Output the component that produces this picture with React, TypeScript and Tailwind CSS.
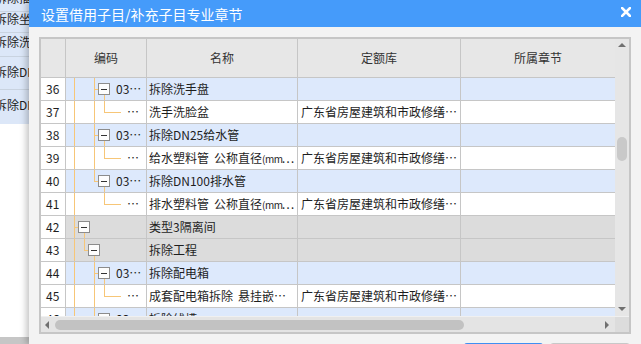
import React from 'react';

const LINE = '#f7c677';
const LIB = '广东省房屋建筑和市政修缮…';

type Seg = [number, number, number, number];
type Tone = 'blue' | 'white' | 'gray';

type Row = {
    n: number;
    tone: Tone;
    segs: Seg[];
    box?: number;
    code?: string;
    leaf?: boolean;
    name: React.ReactNode;
    lib?: string;
};

// tree connector pieces, in px relative to the 编码 cell
const L1: Seg = [8.5, 0, 8.5, 22];
const L2: Seg = [28.5, 0, 28.5, 22];
const L2top: Seg = [28.5, 0, 28.5, 11.5];
const stub: Seg = [28.5, 11.5, 32, 11.5];
const down: Seg = [38.5, 17, 38.5, 22];
const leafV: Seg = [38.5, 0, 38.5, 11.5];
const leafH: Seg = [38.5, 11.5, 55, 11.5];

const Pipe = ({ head }: { head: string }) => (
    <>
        {head}
        <span className="ml-[5px]">公称直径</span>
        <span className="text-[10px] tracking-[-0.5px]">(mm</span>
        <span className="-ml-[1px]">…</span>
    </>
);

const rows: Row[] = [
    { n: 36, tone: 'blue', segs: [L1, L2, stub, down], box: 32, code: '03…', name: '拆除洗手盘' },
    { n: 37, tone: 'white', segs: [L1, L2, leafV, leafH], leaf: true, name: '洗手洗脸盆', lib: LIB },
    { n: 38, tone: 'blue', segs: [L1, L2, stub, down], box: 32, code: '03…', name: '拆除DN25给水管' },
    { n: 39, tone: 'white', segs: [L1, L2, leafV, leafH], leaf: true, name: <Pipe head="给水塑料管" />, lib: LIB },
    { n: 40, tone: 'blue', segs: [L1, L2top, stub, down], box: 32, code: '03…', name: '拆除DN100排水管' },
    { n: 41, tone: 'white', segs: [L1, leafV, leafH], leaf: true, name: <Pipe head="排水塑料管" />, lib: LIB },
    { n: 42, tone: 'gray', segs: [L1, [8.5, 11.5, 12, 11.5], [18.5, 17, 18.5, 22]], box: 12, name: '类型3隔离间' },
    {
        n: 43,
        tone: 'gray',
        segs: [L1, [18.5, 0, 18.5, 11.5], [18.5, 11.5, 22, 11.5], [28.5, 17, 28.5, 22]],
        box: 22,
        name: '拆除工程',
    },
    { n: 44, tone: 'blue', segs: [L1, L2, stub, down], box: 32, code: '03…', name: '拆除配电箱' },
    {
        n: 45,
        tone: 'white',
        segs: [L1, L2, leafV, leafH],
        leaf: true,
        name: (
            <>
                成套配电箱拆除<span className="ml-[5px]">悬挂嵌…</span>
            </>
        ),
        lib: LIB,
    },
    { n: 46, tone: 'blue', segs: [L1, L2, stub, down], box: 32, code: '03…', name: '拆除线槽' },
];

const toneClass: Record<Tone, string> = {
    blue: 'bg-[#dde9fc]',
    white: 'bg-white',
    gray: 'bg-[#dcdcdc]',
};

const TreeLines = ({ segs, box }: { segs: Seg[]; box?: number }) => (
    <svg className="absolute inset-0" width="80" height="22" shapeRendering="crispEdges">
        {segs.map(([x1, y1, x2, y2], i) => (
            <line key={i} x1={x1} y1={y1} x2={x2} y2={y2} stroke={LINE} strokeWidth="1" />
        ))}
        {box !== undefined && (
            <g>
                <rect x={box + 0.5} y={5.5} width={11} height={11} fill="#fdfdfd" stroke="#8c8c8c" />
                <line x1={box + 3} y1={11.5} x2={box + 9} y2={11.5} stroke="#333" />
            </g>
        )}
    </svg>
);

const BackWindow = () => (
    <div className="w-[29px] shrink-0 overflow-hidden bg-white flex flex-col text-[12px] leading-[12px] text-[#222]">
        <div className="h-[12px] bg-[#dce7f8] border-b border-[#c9d3e0] overflow-hidden">
            <div className="-mt-[8px] -ml-[5px] whitespace-nowrap">拆除插</div>
        </div>
        <div className="h-[21px] bg-[#dce7f8] border-b border-[#c9d3e0]">
            <div className="pt-[1px] -ml-[5px] whitespace-nowrap">拆除坐</div>
        </div>
        <div className="h-[24px] bg-[#dce7f8] border-b border-[#c9d3e0]">
            <div className="pt-[3px] -ml-[5px] whitespace-nowrap">拆除洗</div>
        </div>
        <div className="h-[33px] bg-[#dce7f8] border-b border-[#c9d3e0]">
            <div className="pt-[9px] -ml-[5px] whitespace-nowrap">拆除DN</div>
        </div>
        <div className="h-[34px] bg-[#dce7f8]">
            <div className="pt-[9px] -ml-[5px] whitespace-nowrap">拆除DN</div>
        </div>
        <div className="flex-1" />
        <div className="h-[7px] bg-[#c6c6c6]" />
    </div>
);

const Header = () => (
    <div className="flex h-[39px] shrink-0 bg-[#e7e7e7] border-b border-[#c6c6c6] text-[12px] text-[#333]">
        <div className="w-[25px] border-r border-[#c6c6c6]" />
        <div className="w-[81px] border-r border-[#c6c6c6] flex items-center justify-center">编码</div>
        <div className="w-[151px] border-r border-[#c6c6c6] flex items-center justify-center">名称</div>
        <div className="w-[163px] border-r border-[#c6c6c6] flex items-center justify-center">定额库</div>
        <div className="w-[154px] flex items-center justify-center">所属章节</div>
    </div>
);

const GridRow = ({ row }: { row: Row }) => {
    const tone = toneClass[row.tone];
    return (
        <div className="flex h-[23px] shrink-0 border-b border-[#c6c6c6] text-[12px] text-[#1e1e1e]">
            <div className="w-[25px] bg-white border-r border-[#c6c6c6] flex items-center pl-[5px]">{row.n}</div>
            <div className={`w-[81px] relative border-r border-[#c6c6c6] flex items-center ${tone}`}>
                <TreeLines segs={row.segs} box={row.box} />
                {row.code && <span className="relative pl-[50px] whitespace-nowrap">{row.code}</span>}
                {row.leaf && <span className="relative pl-[61px]">…</span>}
            </div>
            <div className={`w-[151px] border-r border-[#c6c6c6] flex items-center pl-[2px] whitespace-nowrap overflow-hidden ${tone}`}>
                <span>{row.name}</span>
            </div>
            <div className={`w-[163px] border-r border-[#c6c6c6] flex items-center pl-[3px] whitespace-nowrap overflow-hidden ${tone}`}>
                {row.lib}
            </div>
            <div className={`w-[154px] ${tone}`} />
        </div>
    );
};

const VScroll = () => (
    <div className="w-[14px] shrink-0 bg-[#e6e6e6] flex flex-col items-center">
        <div className="mt-[4px] w-0 h-0 border-l-[4px] border-r-[4px] border-b-[4px] border-l-transparent border-r-transparent border-b-[#707070]" />
        <div className="mt-[90px] w-[10px] h-[24px] rounded-[5px] bg-[#c9c9c9]" />
        <div className="flex-1" />
        <div className="mb-[5px] w-0 h-0 border-l-[4px] border-r-[4px] border-t-[4px] border-l-transparent border-r-transparent border-t-[#707070]" />
    </div>
);

const HScroll = () => (
    <div className="flex h-[16px] shrink-0 border-t border-[#f0f0f0]">
        <div className="w-[574px] bg-[#e4e4e4] flex items-center">
            <div className="ml-[4px] w-0 h-0 border-t-[4px] border-b-[4px] border-r-[4px] border-t-transparent border-b-transparent border-r-[#707070]" />
            <div className="ml-[6px] w-[409px] h-[10px] rounded-[5px] bg-[#c2c2c2]" />
            <div className="flex-1" />
            <div className="mr-[6px] w-0 h-0 border-t-[4px] border-b-[4px] border-l-[4px] border-t-transparent border-b-transparent border-l-[#707070]" />
        </div>
        <div className="w-[14px] bg-[#dcdcdc]" />
    </div>
);

export default function App() {
    return (
        <div className="w-[641px] h-[344px] overflow-hidden flex font-['Noto_Sans_CJK_SC',sans-serif] bg-white">
            <BackWindow />
            <div className="relative z-10 flex-1 flex flex-col bg-[#f3f3f3] shadow-[-3px_0_6px_rgba(0,0,0,0.22)]">
                <div className="h-[27px] shrink-0 bg-[#459bfa] flex items-center justify-between pl-[12px] pr-[10px]">
                    <span className="text-white text-[14px] leading-none">设置借用子目/补充子目专业章节</span>
                    <svg width="10" height="10" viewBox="0 0 10 10" className="-mt-[4px]">
                        <path d="M1 1 L9 9 M9 1 L1 9" stroke="white" strokeWidth="2.6" strokeLinecap="square" />
                    </svg>
                </div>
                <div className="flex-1 flex flex-col pt-[10px] pl-[10px] pr-[10px]">
                    <div className="w-[592px] shrink-0 border-2 border-[#c6c6c6] flex flex-col bg-white">
                        <div className="flex h-[277px]">
                            <div className="w-[574px] flex flex-col overflow-hidden">
                                <Header />
                                {rows.map((row) => (
                                    <GridRow key={row.n} row={row} />
                                ))}
                            </div>
                            <VScroll />
                        </div>
                        <HScroll />
                    </div>
                    <div className="flex justify-end gap-[7px] mt-[9px] pr-[1px]">
                        <div className="w-[79px] h-[28px] rounded-[3px] bg-[#3f8ff2]" />
                        <div className="w-[80px] h-[28px] rounded-[3px] border border-[#c8c8c8] bg-white" />
                    </div>
                </div>
            </div>
        </div>
    );
}
